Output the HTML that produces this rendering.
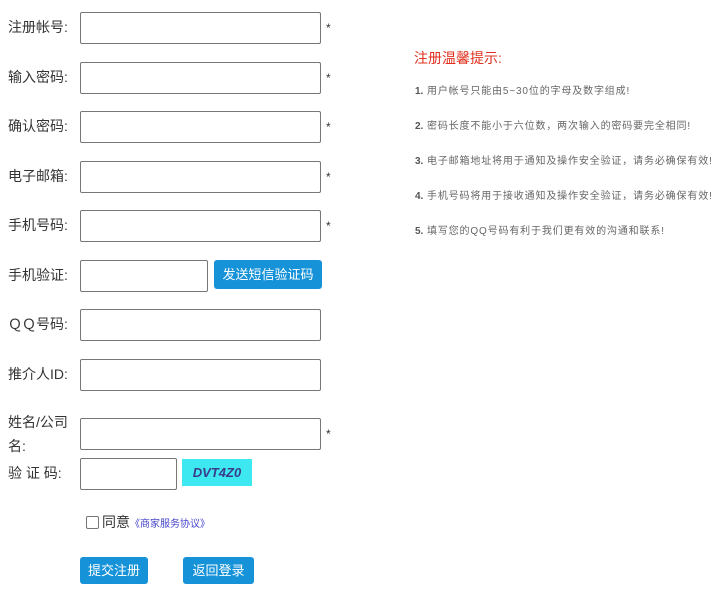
<!DOCTYPE html>
<html><head><meta charset="utf-8"><style>
body{margin:0;width:719px;height:594px;background:#fff;font-family:"Liberation Sans","Noto Sans CJK SC",sans-serif;color:#333;position:relative;overflow:hidden}
.a{position:absolute}
.l{position:absolute;left:8px;font-size:14px;line-height:20px;color:#333}
.i{position:absolute;left:80px;width:239px;height:30px;border:1px solid #777;border-radius:2px;background:#fff}
.s{position:absolute;left:326px;font-size:12px;color:#333}
.b{position:absolute;background:#1592d8;color:#fff;font-size:13px;border-radius:3px;text-align:center}
.t{position:absolute;left:415px;font-size:10px;color:#666;white-space:nowrap;letter-spacing:0.85px}
.t b{color:#555;letter-spacing:0}
</style></head><body>
<div class="l" style="top:17px">注册帐号:</div><div class="i" style="top:12px"></div><div class="s" style="top:21px">*</div>
<div class="l" style="top:67px">输入密码:</div><div class="i" style="top:62px"></div><div class="s" style="top:71px">*</div>
<div class="l" style="top:116px">确认密码:</div><div class="i" style="top:111px"></div><div class="s" style="top:120px">*</div>
<div class="l" style="top:166px">电子邮箱:</div><div class="i" style="top:161px"></div><div class="s" style="top:170px">*</div>
<div class="l" style="top:215px">手机号码:</div><div class="i" style="top:210px"></div><div class="s" style="top:219px">*</div>
<div class="l" style="top:265px">手机验证:</div><div class="i" style="top:260px;width:126px"></div>
<div class="b" style="left:214px;top:260px;width:108px;height:29px;line-height:29px">发送短信验证码</div>
<div class="l" style="top:314px">ＱＱ号码:</div><div class="i" style="top:309px"></div>
<div class="l" style="top:364px">推介人ID:</div><div class="i" style="top:359px"></div>
<div class="l" style="top:410px;line-height:24px">姓名/公司<br>名:</div><div class="i" style="top:418px"></div><div class="s" style="top:427px">*</div>
<div class="l" style="top:463px">验 证 码:</div><div class="i" style="top:458px;width:95px"></div>
<div class="a" style="left:182px;top:459px;width:70px;height:27px;background:#3ee8f0;color:#3a3a8a;font:italic bold 13px 'Liberation Sans',sans-serif;line-height:27px;text-align:center">DVT4Z0</div>
<div class="a" style="left:86px;top:516px;width:11px;height:11px;border:1px solid #777;border-radius:2px"></div>
<div class="a" style="left:102px;top:512px;font-size:14px;color:#333">同意<span style="font-size:10px;color:#4444cc">《商家服务协议》</span></div>
<div class="b" style="left:80px;top:557px;width:68px;height:27px;line-height:27px">提交注册</div>
<div class="b" style="left:183px;top:557px;width:71px;height:27px;line-height:27px">返回登录</div>
<div class="a" style="left:414px;top:48px;font-size:14px;color:#e0301e">注册温馨提示:</div>
<div class="t" style="top:82px"><b>1.</b> 用户帐号只能由5~30位的字母及数字组成!</div>
<div class="t" style="top:117px"><b>2.</b> 密码长度不能小于六位数，两次输入的密码要完全相同!</div>
<div class="t" style="top:152px"><b>3.</b> 电子邮箱地址将用于通知及操作安全验证，请务必确保有效!</div>
<div class="t" style="top:187px"><b>4.</b> 手机号码将用于接收通知及操作安全验证，请务必确保有效!</div>
<div class="t" style="top:222px"><b>5.</b> 填写您的QQ号码有利于我们更有效的沟通和联系!</div>
</body></html>
